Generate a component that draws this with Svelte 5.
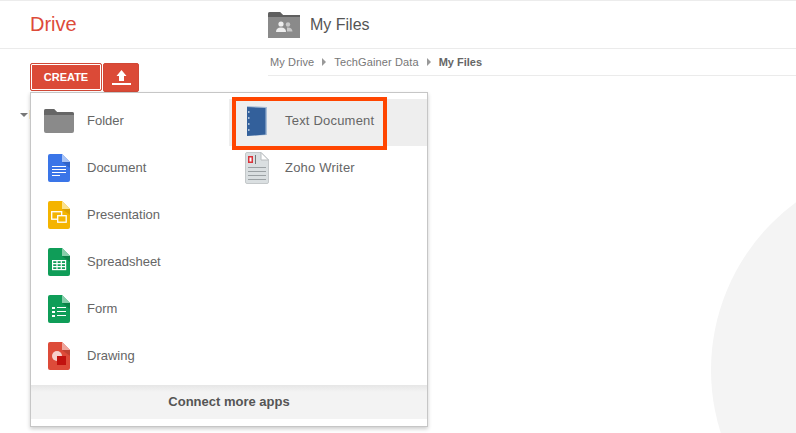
<script>
	const leftItems = [
		{ label: 'Folder', icon: 'folder' },
		{ label: 'Document', icon: 'doc' },
		{ label: 'Presentation', icon: 'slides' },
		{ label: 'Spreadsheet', icon: 'sheet' },
		{ label: 'Form', icon: 'form' },
		{ label: 'Drawing', icon: 'drawing' }
	];
	const rightItems = [
		{ label: 'Text Document', icon: 'text', active: true },
		{ label: 'Zoho Writer', icon: 'zoho' }
	];
	const colors = {
		doc: ['#3a75e8', '#a9c4f5', '#2a56ad'],
		slides: ['#f4b400', '#fbe28e', '#c99400'],
		sheet: ['#0f9d58', '#87ceab', '#0a6b3c'],
		form: ['#0f9d58', '#87ceab', '#0a6b3c'],
		drawing: ['#dd4b39', '#eea59c', '#a83a2c']
	};
</script>

{#snippet icon(name)}
	{#if name === 'folder'}
		<svg width="30" height="24" viewBox="0 0 30 24">
			<path d="M0 2q0-2 2-2h8l3 3h15q2 0 2 2v17q0 2-2 2H2q-2 0-2-2z" fill="#8a8a8a" />
			<path d="M0 2q0-2 2-2h8l3 3h15q2 0 2 2v1H0z" fill="#666" />
		</svg>
	{:else if name === 'text'}
		<svg width="20" height="30" viewBox="0 0 20 30">
			<path d="M0 0l20 1v28L0 30z" fill="#a8bdd6" />
			<path d="M0 1l18.500 1v26.500L0 30z" fill="#33609b" />
			<g fill="#a9c0da">
				<rect x="1" y="5" width="1.500" height="2" />
				<rect x="1" y="11" width="1.500" height="2" />
				<rect x="1" y="17" width="1.500" height="2" />
				<rect x="1" y="23" width="1.500" height="2" />
			</g>
		</svg>
	{:else if name === 'zoho'}
		<svg width="24" height="32" viewBox="0 0 24 32">
			<path d="M.5 2Q.5.5 2 .5h14L23.500 8v22q0 1.500-1.500 1.500H2Q.5 31.500.5 30z" fill="#dadfe1" stroke="#c4c8ca" />
			<path d="M16 .5V8h7.500z" fill="#fff" stroke="#b8bcbe" />
			<rect x="3" y="4" width="5" height="7" fill="#d8333a" />
			<rect x="4.500" y="5.500" width="2" height="4" fill="#fff" />
			<rect x="10" y="3" width="1" height="9" fill="#777" />
			<g fill="#9ba1a4">
				<rect x="3" y="15" width="18" height="1" />
				<rect x="3" y="19" width="18" height="1" />
				<rect x="3" y="23" width="18" height="1" />
				<rect x="3" y="27" width="18" height="1" />
			</g>
		</svg>
	{:else}
		<svg width="22" height="28" viewBox="0 0 22 28">
			<path d="M0 2q0-2 2-2h12l8 8v18q0 2-2 2H2q-2 0-2-2z" fill={colors[name][0]} />
			<path d="M14 0l8 8h-8z" fill={colors[name][1]} />
			<path d="M14 8h8v6z" fill={colors[name][2]} opacity=".55" />
			{#if name === 'doc'}
				<g fill="#fff">
					<rect x="4" y="12" width="14" height="1" />
					<rect x="4" y="15" width="14" height="1" />
					<rect x="4" y="18" width="14" height="1" />
					<rect x="4" y="21" width="8" height="1" />
				</g>
			{:else if name === 'slides'}
				<g fill="none" stroke="#fff" stroke-width="1.300">
					<rect x="3.700" y="10.700" width="10" height="7.500" />
					<rect x="9.700" y="14.700" width="8.500" height="6.500" fill={colors.slides[0]} />
				</g>
			{:else if name === 'sheet'}
				<g fill="none" stroke="#fff" stroke-width="1.200">
					<rect x="4.600" y="12.600" width="13" height="9" />
					<path d="M4.600 15.600h13M4.600 18.600h13M9 12.600v9M13.300 12.600v9" />
				</g>
			{:else if name === 'form'}
				<g fill="#fff">
					<rect x="4" y="12" width="3" height="2" />
					<rect x="4" y="16" width="3" height="2" />
					<rect x="4" y="20" width="3" height="2" />
					<rect x="9" y="12" width="9" height="1" />
					<rect x="9" y="16" width="9" height="1" />
					<rect x="9" y="20" width="9" height="1" />
				</g>
			{:else}
				<circle cx="9" cy="14" r="5" fill="#f6d0cb" />
				<rect x="9" y="14" width="9" height="9" fill="#c1120f" />
			{/if}
		</svg>
	{/if}
{/snippet}

<div class="page">
	<header>
		<div class="brand">Drive</div>
		<div class="title">
			<svg width="32" height="26" viewBox="0 0 32 26">
				<path d="M0 2q0-2 2-2h10l3 3h17v23H0z" fill="#8a8a8a" />
				<path d="M0 2q0-2 2-2h10l3 3h17v2H0z" fill="#5f5f5f" />
				<circle cx="13" cy="12" r="2.600" fill="#eee" />
				<path d="M8 20q0-4.500 5-4.500t5 4.500z" fill="#eee" />
				<circle cx="20" cy="12.500" r="2.200" fill="#c8c8c8" />
				<path d="M19 15.500q5-.5 5.500 4H19z" fill="#c8c8c8" />
			</svg>
			<span>My Files</span>
		</div>
	</header>

	<div class="main">
		<aside>
			<div class="actions">
				<button class="create">CREATE</button>
				<button class="upload" aria-label="Upload">
					<svg width="19" height="15" viewBox="0 0 19 15">
						<path d="M9.500 0L14.500 6h-2.500v5H7V6H4.500z" fill="#fff" />
						<rect x="0" y="13" width="19" height="2" fill="#fff" />
					</svg>
				</button>
			</div>
			<div class="tree"><span class="caret"></span><span class="tree-label">My Drive</span></div>
		</aside>
		<div class="content">
			<nav class="crumbs">
				<span>My Drive</span><i></i><span>TechGainer Data</span><i></i><b>My Files</b>
			</nav>
		</div>
	</div>

	<div class="menu">
		<div class="columns">
			<ul>
				{#each leftItems as item}
					<li>
						<div class="ico">{@render icon(item.icon)}</div>
						{item.label}
					</li>
				{/each}
			</ul>
			<ul class="right">
				{#each rightItems as item}
					<li class:active={item.active}>
						<div class="ico">{@render icon(item.icon)}</div>
						{item.label}
					</li>
				{/each}
			</ul>
		</div>
		<div class="more">Connect more apps</div>
	</div>

	<div class="callout"></div>
	<div class="blob"></div>
</div>

<style>
	:global(body) {
		background: #fff;
	}

	.page {
		position: relative;
		width: 796px;
		height: 433px;
		overflow: hidden;
		background: #fff;
		font-family: Arial, 'Liberation Sans', sans-serif;
		color: #666;
		border-top: 1px solid #ececec;
		box-sizing: border-box;
	}

	header {
		display: flex;
		align-items: center;
		height: 47px;
		border-bottom: 1px solid #ebebeb;
	}

	.brand {
		width: 268px;
		padding-left: 30px;
		box-sizing: border-box;
		font-size: 20px;
		color: #dd4b39;
	}

	.title {
		display: flex;
		align-items: center;
		gap: 10px;
		font-size: 16px;
		color: #555;
	}

	.main {
		display: flex;
	}

	aside {
		width: 268px;
		flex: none;
	}

	.actions {
		display: flex;
		gap: 1px;
		padding: 14px 0 0 30px;
	}

	button {
		border: 1px solid #d14836;
		border-radius: 2px;
		background: #db4a37;
		color: #fff;
		font: bold 11px Arial, 'Liberation Sans', sans-serif;
		height: 29px;
		padding: 0;
	}

	.create {
		width: 72px;
		height: 28px;
		box-shadow: inset 0 0 0 1px #fff;
	}

	.upload {
		width: 36px;
		display: flex;
		align-items: center;
		justify-content: center;
	}

	.tree {
		display: flex;
		align-items: center;
		gap: 1px;
		padding: 15px 0 0 20px;
		font-size: 13px;
		color: #555;
		white-space: nowrap;
	}

	.caret {
		width: 0;
		border: 4px solid transparent;
		border-top-color: #777;
		border-bottom: 0;
	}

	.content {
		flex: 1;
	}

	.crumbs {
		display: flex;
		align-items: center;
		height: 26px;
		border-bottom: 1px solid #ebebeb;
		padding-left: 2px;
		font-size: 11px;
		letter-spacing: 0.12px;
		color: #777;
	}

	.crumbs i {
		width: 0;
		margin: 0 8px;
		border: 4px solid transparent;
		border-left-color: #999;
		border-right: 0;
	}

	.crumbs b {
		color: #666;
		letter-spacing: 0;
	}

	.menu {
		position: absolute;
		left: 30px;
		top: 91px;
		width: 398px;
		height: 335px;
		box-sizing: border-box;
		background: #fff;
		border: 1px solid #c6c6c6;
		box-shadow: 0 2px 4px rgba(0, 0, 0, 0.2);
		z-index: 2;
	}

	.columns {
		display: flex;
		height: 292px;
		padding-top: 6px;
		box-sizing: border-box;
	}

	ul {
		list-style: none;
		margin: 0;
		padding: 0;
		width: 198px;
	}

	.right {
		flex: 1;
	}

	li {
		display: flex;
		align-items: center;
		height: 47px;
		padding-bottom: 4px;
		box-sizing: border-box;
		font-size: 13px;
		color: #666;
	}

	.right li {
		letter-spacing: 0.2px;
	}

	.ico {
		width: 30px;
		margin: 0 13px;
		display: flex;
		justify-content: center;
		flex: none;
	}

	.active {
		background: #eee;
	}

	.more {
		height: 34px;
		line-height: 34px;
		text-align: center;
		background: linear-gradient(#e6e6e6, #f3f3f3 7px);
		font-size: 13px;
		font-weight: bold;
		color: #555;
	}

	.callout {
		position: absolute;
		left: 232px;
		top: 96px;
		width: 155px;
		height: 53px;
		box-sizing: border-box;
		border: 4px solid #ff4500;
		z-index: 3;
	}

	.blob {
		position: absolute;
		left: 711px;
		top: 161px;
		width: 416px;
		height: 416px;
		border-radius: 50%;
		background: #f4f4f4;
	}
</style>
